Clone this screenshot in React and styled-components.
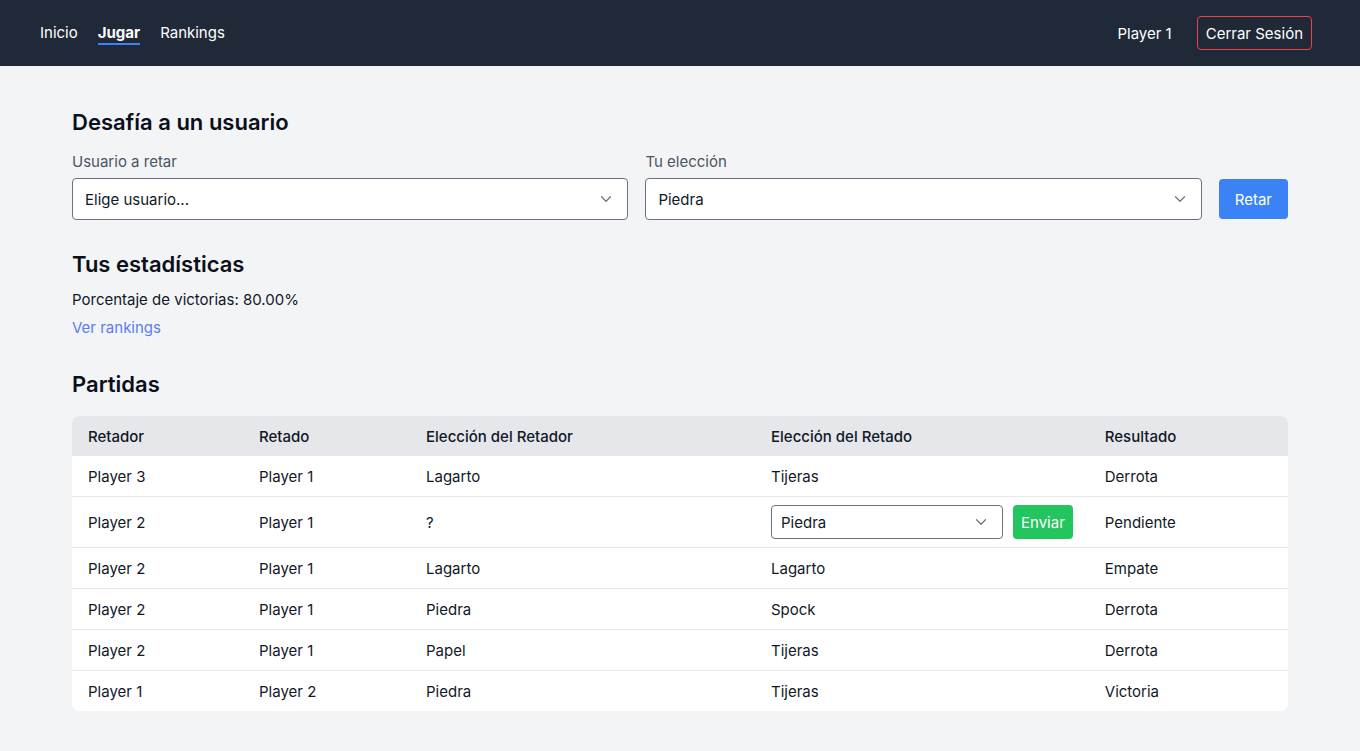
import React from "react"
import styled, { createGlobalStyle } from "styled-components"

const GlobalStyle = createGlobalStyle`
  body {
    margin: 0;
    background: #f3f4f6;
    font-family: Inter, "Noto Sans", sans-serif;
    color: #111827;
  }
`

const NavBar = styled.nav`
  height: 66px;
  background: #1f2937;
  display: flex;
  align-items: center;
  justify-content: space-between;
  padding: 0 48px 0 40px;
`

const NavLinks = styled.div`
  display: flex;
  gap: 20px;
  padding-top: 2px;
`

const NavLink = styled.a`
  color: #fff;
  font-size: 15px;
  font-weight: ${props => (props.active ? 700 : 400)};
  text-decoration: none;
  padding-bottom: 1px;
  border-bottom: 2px solid ${props => (props.active ? "#3b82f6" : "transparent")};
`

const NavRight = styled.div`
  display: flex;
  align-items: center;
  gap: 25px;
  color: #fff;
  font-size: 15px;
`

const LogoutButton = styled.button`
  font: inherit;
  color: #fff;
  background: transparent;
  border: 1px solid #ef4444;
  border-radius: 4px;
  height: 34px;
  padding: 0 8px;
`

const Main = styled.main`
  padding: 43px 72px 40px;
`

const SectionTitle = styled.h2`
  font-size: 22px;
  font-weight: 600;
  color: #0b0f19;
  margin: 0 0 ${props => props.mb || 13}px;
`

const ChallengeRow = styled.div`
  display: flex;
  align-items: flex-end;
  gap: 17px;
  margin: 0 0 31px;
`

const Field = styled.div`
  flex: 1;
  display: flex;
  flex-direction: column;
  gap: 7px;
`

const Label = styled.label`
  font-size: 15px;
  color: #4b5563;
`

const SelectBox = styled.div`
  height: ${props => props.h || 42}px;
  width: ${props => (props.w ? props.w + "px" : "auto")};
  box-sizing: border-box;
  border: 1px solid #6b7280;
  border-radius: 4px;
  background: #fff;
  display: flex;
  align-items: center;
  justify-content: space-between;
  padding: 0 12px 0 ${props => (props.small ? 9 : 12)}px;
  font-size: 15px;
  color: #111827;
`

const Button = styled.button`
  font: inherit;
  font-size: 15px;
  color: #fff;
  background: ${props => props.bg};
  border: none;
  border-radius: 4px;
  height: ${props => props.h}px;
  padding: 0 ${props => props.px}px;
`

const RetarButton = styled(Button)`
  margin-bottom: 1px;
`

const StatText = styled.p`
  font-size: 15px;
  margin: 0 0 8px;
`

const Link = styled.a`
  font-size: 15px;
  color: #5b7cf5;
  text-decoration: none;
  display: inline-block;
  margin-bottom: 34px;
`

const Table = styled.table`
  width: 100%;
  border-collapse: separate;
  border-spacing: 0;
  background: #fff;
  border-radius: 8px;
  overflow: hidden;
  font-size: 15px;
`

const Th = styled.th`
  background: #e5e7eb;
  text-align: left;
  font-weight: 500;
  height: 40px;
  padding: 0 16px;
  width: ${props => props.w}px;
`

const Td = styled.td`
  height: ${props => props.h || 40}px;
  padding: 0 16px;
  border-top: ${props => (props.first ? "none" : "1px solid #e5e7eb")};
`

const ChoiceCell = styled.div`
  display: flex;
  align-items: center;
  gap: 10px;
`

const Chevron = () => (
  <svg width="18" height="18" viewBox="0 0 24 24" fill="none" stroke="#6b7280" strokeWidth="1.6" strokeLinecap="round" strokeLinejoin="round">
    <path d="M6 9l6 6 6-6" />
  </svg>
)

const games = [
  ["Player 3", "Player 1", "Lagarto", "Tijeras", "Derrota"],
  ["Player 2", "Player 1", "?", null, "Pendiente"],
  ["Player 2", "Player 1", "Lagarto", "Lagarto", "Empate"],
  ["Player 2", "Player 1", "Piedra", "Spock", "Derrota"],
  ["Player 2", "Player 1", "Papel", "Tijeras", "Derrota"],
  ["Player 1", "Player 2", "Piedra", "Tijeras", "Victoria"],
]

export default function App() {
  return (
    <>
      <GlobalStyle />
      <NavBar>
        <NavLinks>
          <NavLink>Inicio</NavLink>
          <NavLink active>Jugar</NavLink>
          <NavLink>Rankings</NavLink>
        </NavLinks>
        <NavRight>
          <span>Player 1</span>
          <LogoutButton>Cerrar Sesión</LogoutButton>
        </NavRight>
      </NavBar>
      <Main>
        <SectionTitle mb={17}>Desafía a un usuario</SectionTitle>
        <ChallengeRow>
          <Field>
            <Label>Usuario a retar</Label>
            <SelectBox>
              <span>Elige usuario...</span>
              <Chevron />
            </SelectBox>
          </Field>
          <Field>
            <Label>Tu elección</Label>
            <SelectBox>
              <span>Piedra</span>
              <Chevron />
            </SelectBox>
          </Field>
          <RetarButton bg="#3b82f6" h={40} px={16}>Retar</RetarButton>
        </ChallengeRow>

        <SectionTitle>Tus estadísticas</SectionTitle>
        <StatText>Porcentaje de victorias: 80.00%</StatText>
        <Link>Ver rankings</Link>

        <SectionTitle mb={19}>Partidas</SectionTitle>
        <Table>
          <thead>
            <tr>
              <Th w={139}>Retador</Th>
              <Th w={135}>Retado</Th>
              <Th w={313}>Elección del Retador</Th>
              <Th w={300}>Elección del Retado</Th>
              <Th>Resultado</Th>
            </tr>
          </thead>
          <tbody>
            {games.map((g, i) => (
              <tr key={i}>
                {g.map((c, j) => (
                  <Td key={j} first={i === 0} h={c === null ? 50 : 40}>
                    {c === null ? (
                      <ChoiceCell>
                        <SelectBox small w={232} h={34}>
                          <span>Piedra</span>
                          <Chevron />
                        </SelectBox>
                        <Button bg="#22c55e" h={34} px={8}>Enviar</Button>
                      </ChoiceCell>
                    ) : (
                      c
                    )}
                  </Td>
                ))}
              </tr>
            ))}
          </tbody>
        </Table>
      </Main>
    </>
  )
}
